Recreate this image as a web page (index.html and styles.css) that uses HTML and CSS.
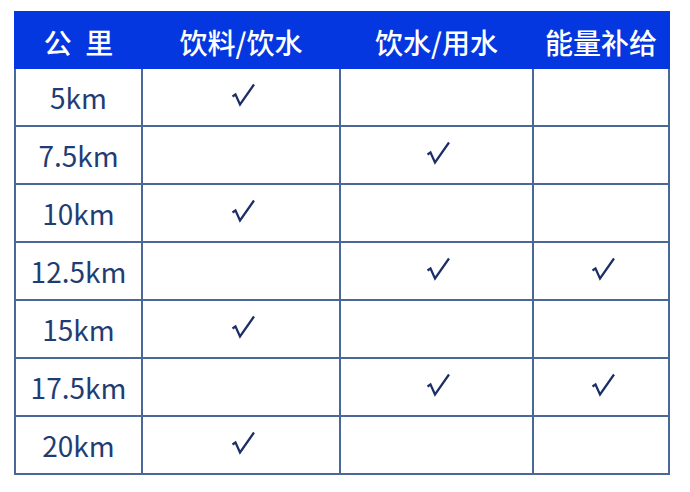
FILE: index.html
```html
<!DOCTYPE html>
<html lang="zh">
<head>
<meta charset="utf-8">
<link rel="stylesheet" href="styles.css">
</head>
<body>
<div class="table">
  <div class="head">
    <div class="hc wide">公 里</div>
    <div class="hc">饮料/饮水</div>
    <div class="hc">饮水/用水</div>
    <div class="hc">能量补给</div>
  </div>
  <div class="body">
    <div class="c">5km</div><div class="c"><svg class="ck" viewBox="0 0 24 24"><path d="M1.5 13.5 L4.5 11.5 L9 21.5 L23 1.5"/></svg></div><div class="c"></div><div class="c"></div>
    <div class="c">7.5km</div><div class="c"></div><div class="c"><svg class="ck" viewBox="0 0 24 24"><path d="M1.5 13.5 L4.5 11.5 L9 21.5 L23 1.5"/></svg></div><div class="c"></div>
    <div class="c">10km</div><div class="c"><svg class="ck" viewBox="0 0 24 24"><path d="M1.5 13.5 L4.5 11.5 L9 21.5 L23 1.5"/></svg></div><div class="c"></div><div class="c"></div>
    <div class="c">12.5km</div><div class="c"></div><div class="c"><svg class="ck" viewBox="0 0 24 24"><path d="M1.5 13.5 L4.5 11.5 L9 21.5 L23 1.5"/></svg></div><div class="c"><svg class="ck" viewBox="0 0 24 24"><path d="M1.5 13.5 L4.5 11.5 L9 21.5 L23 1.5"/></svg></div>
    <div class="c">15km</div><div class="c"><svg class="ck" viewBox="0 0 24 24"><path d="M1.5 13.5 L4.5 11.5 L9 21.5 L23 1.5"/></svg></div><div class="c"></div><div class="c"></div>
    <div class="c">17.5km</div><div class="c"></div><div class="c"><svg class="ck" viewBox="0 0 24 24"><path d="M1.5 13.5 L4.5 11.5 L9 21.5 L23 1.5"/></svg></div><div class="c"><svg class="ck" viewBox="0 0 24 24"><path d="M1.5 13.5 L4.5 11.5 L9 21.5 L23 1.5"/></svg></div>
    <div class="c">20km</div><div class="c"><svg class="ck" viewBox="0 0 24 24"><path d="M1.5 13.5 L4.5 11.5 L9 21.5 L23 1.5"/></svg></div><div class="c"></div><div class="c"></div>
  </div>
</div>
</body>
</html>
```

FILE: styles.css
```css
html, body {
  margin: 0;
  padding: 0;
  background: #ffffff;
}
body {
  font-family: "Noto Sans CJK SC", "Noto Sans", sans-serif;
}
.table {
  width: 656px;
  margin: 11px 0 0 14px;
}
.head {
  display: grid;
  grid-template-columns: 125px 196px 191px 134px;
  column-gap: 2px;
  padding: 0 2px;
  height: 58px;
  background: #0537e0;
  color: #ffffff;
}
.hc {
  display: flex;
  align-items: center;
  justify-content: center;
  padding-top: 3px;
  font-size: 28px;
  font-weight: 500;
  line-height: 1;
}
.wide {
  word-spacing: 7px;
}
.body {
  display: grid;
  grid-template-columns: 125px 196px 191px 134px;
  grid-auto-rows: 56px;
  gap: 2px;
  padding: 0 2px 2px 2px;
  background: #4a6897;
}
.c {
  background: #ffffff;
  display: flex;
  align-items: center;
  justify-content: center;
  font-size: 28px;
  color: #1f3d74;
  line-height: 1;
}
.ck {
  width: 24px;
  height: 24px;
  margin: 0 0 4px 3px;
  fill: none;
  stroke: #1b2e66;
  stroke-width: 2.2;
  stroke-linejoin: miter;
  stroke-linecap: butt;
}
```
